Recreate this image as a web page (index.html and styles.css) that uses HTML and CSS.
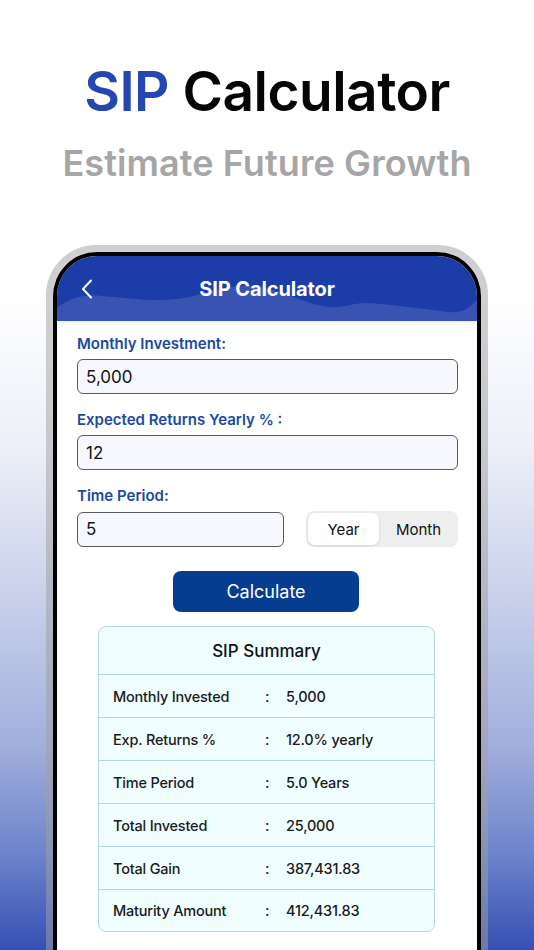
FILE: index.html
```html
<!DOCTYPE html>
<html>
<head>
<meta charset="utf-8">
<link rel="stylesheet" href="styles.css">
</head>
<body>
<div class="page">
  <header class="hero">
    <h1 class="hero-title"><span class="accent">SIP</span> Calculator</h1>
    <p class="hero-sub">Estimate Future Growth</p>
  </header>
  <div class="phone">
    <div class="screen">
      <div class="appbar">
        <svg class="wave" viewBox="0 0 419 65" preserveAspectRatio="none">
          <path d="M0 65 L0 52 C12 42 25 38 45 40 C70 42 95 46 120 43 C150 39 165 28 195 30 C225 33 240 45 265 50 C285 54 295 46 310 47 C330 48 360 52 390 56 C402 57 410 54 419 44 L419 65 Z" fill="#3853b2"/>
        </svg>
        <svg class="back" viewBox="0 0 12 20"><path d="M10 1.5 L2 10 L10 18.5" fill="none" stroke="#fff" stroke-width="2" stroke-linecap="round" stroke-linejoin="round"/></svg>
        <span class="appbar-title">SIP Calculator</span>
      </div>
      <div class="content">
        <div class="field">
          <label class="label">Monthly Investment:</label>
          <div class="input">5,000</div>
        </div>
        <div class="field">
          <label class="label">Expected Returns Yearly % :</label>
          <div class="input">12</div>
        </div>
        <div class="field">
          <label class="label">Time Period:</label>
          <div class="period-row">
            <div class="input input-short">5</div>
            <div class="segment">
              <span class="seg seg-active">Year</span>
              <span class="seg">Month</span>
            </div>
          </div>
        </div>
        <div class="btn-row"><button class="calc">Calculate</button></div>
        <div class="summary">
          <div class="summary-head">SIP Summary</div>
          <div class="row"><span>Monthly Invested</span><span class="colon">:</span><span>5,000</span></div>
          <div class="row"><span>Exp. Returns %</span><span class="colon">:</span><span>12.0% yearly</span></div>
          <div class="row"><span>Time Period</span><span class="colon">:</span><span>5.0 Years</span></div>
          <div class="row"><span>Total Invested</span><span class="colon">:</span><span>25,000</span></div>
          <div class="row"><span>Total Gain</span><span class="colon">:</span><span>387,431.83</span></div>
          <div class="row"><span>Maturity Amount</span><span class="colon">:</span><span>412,431.83</span></div>
        </div>
      </div>
    </div>
  </div>
</div>
</body>
</html>
```

FILE: styles.css
```css
html, body {
  margin: 0;
  padding: 0;
}
body {
  width: 534px;
  height: 950px;
  overflow: hidden;
  font-family: "Inter", "Roboto", sans-serif;
}
.page {
  height: 950px;
  overflow: hidden;
  background: linear-gradient(to bottom, #ffffff 0px, #ffffff 290px, #eceff8 450px, #c8d0ea 600px, #a0aedc 750px, #6f85cc 850px, #3550b3 950px);
}
.hero {
  padding-top: 58px;
  text-align: center;
}
.hero-title {
  margin: 0;
  font-family: "Inter", sans-serif;
  font-weight: 600;
  font-size: 55px;
  line-height: 66px;
  letter-spacing: -0.5px;
  color: #050505;
}
.accent {
  color: #2447b0;
}
.hero-sub {
  margin: 16px 0 0;
  font-family: "Inter", sans-serif;
  font-weight: 600;
  font-size: 36px;
  line-height: 46px;
  letter-spacing: 0.1px;
  color: #a6a6a6;
}
.phone {
  margin: 59px 0 0 46px;
  width: 428px;
  height: 760px;
  border: 7px solid rgba(160, 160, 160, 0.5);
  border-bottom: none;
  border-radius: 50px 50px 0 0;
}
.screen {
  height: 100%;
  border: 4px solid #000;
  border-bottom: none;
  border-radius: 44px 44px 0 0;
  background: #fff;
  overflow: hidden;
}
.appbar {
  position: relative;
  height: 65px;
  background: #1c3da8;
  display: flex;
  align-items: center;
  justify-content: center;
  box-shadow: 0 2px 5px rgba(0,0,0,0.08);
}
.wave {
  position: absolute;
  left: 0;
  bottom: 0;
  width: 100%;
  height: 65px;
}
.back {
  position: absolute;
  left: 24px;
  top: 23px;
  width: 12px;
  height: 20px;
}
.appbar-title {
  position: relative;
  color: #fff;
  font-weight: 700;
  font-size: 20px;
  letter-spacing: -0.1px;
}
.content {
  padding: 14px 19px 0 20px;
}
.field {
  margin-bottom: 17px;
}
.label {
  display: block;
  color: #1b4a9e;
  font-weight: 600;
  font-size: 15px;
  line-height: 18px;
  margin-bottom: 6px;
}
.input {
  box-sizing: border-box;
  height: 35px;
  border: 1px solid #5a5a5a;
  border-radius: 6px;
  background: #f7f8fd;
  padding: 0 8px;
  display: flex;
  align-items: center;
  font-size: 17px;
  color: #111;
}
.period-row {
  display: flex;
  justify-content: space-between;
  align-items: center;
}
.input-short {
  width: 207px;
}
.segment {
  box-sizing: border-box;
  width: 152px;
  height: 36px;
  background: #eeeeee;
  border-radius: 8px;
  padding: 2px;
  display: flex;
}
.seg {
  flex: 1;
  display: flex;
  align-items: center;
  justify-content: center;
  font-size: 15px;
  color: #111;
}
.seg-active {
  flex: 0 0 71px;
  background: #fff;
  border-radius: 7px;
  box-shadow: 0 1px 3px rgba(0,0,0,0.12);
}
.seg:last-child {
  padding-left: 2px;
}
.btn-row {
  display: flex;
  justify-content: center;
  margin-top: 24px;
  padding-right: 3px;
}
.calc {
  width: 186px;
  height: 41px;
  border: none;
  border-radius: 8px;
  background: #053d91;
  color: #fff;
  font-family: "Inter", sans-serif;
  font-size: 18px;
  font-weight: 400;
}
.summary {
  box-sizing: border-box;
  margin: 14px 0 0 21px;
  width: 337px;
  background: #f0feff;
  border: 1px solid #b5d3f0;
  border-radius: 8px;
  overflow: hidden;
}
.summary-head {
  height: 47px;
  display: flex;
  align-items: center;
  justify-content: center;
  font-size: 17px;
  font-weight: 500;
  color: #111;
  border-bottom: 1px solid #b5d3f0;
}
.row {
  height: 42px;
  display: grid;
  grid-template-columns: 150px 23px 1fr;
  align-items: center;
  padding-left: 14px;
  font-size: 14.5px;
  font-weight: 500;
  letter-spacing: -0.2px;
  color: #1a1a1a;
  border-bottom: 1px solid #b5d3f0;
}
.row:last-child {
  border-bottom: none;
  height: 41px;
}
.colon {
  padding-left: 2px;
}
```
